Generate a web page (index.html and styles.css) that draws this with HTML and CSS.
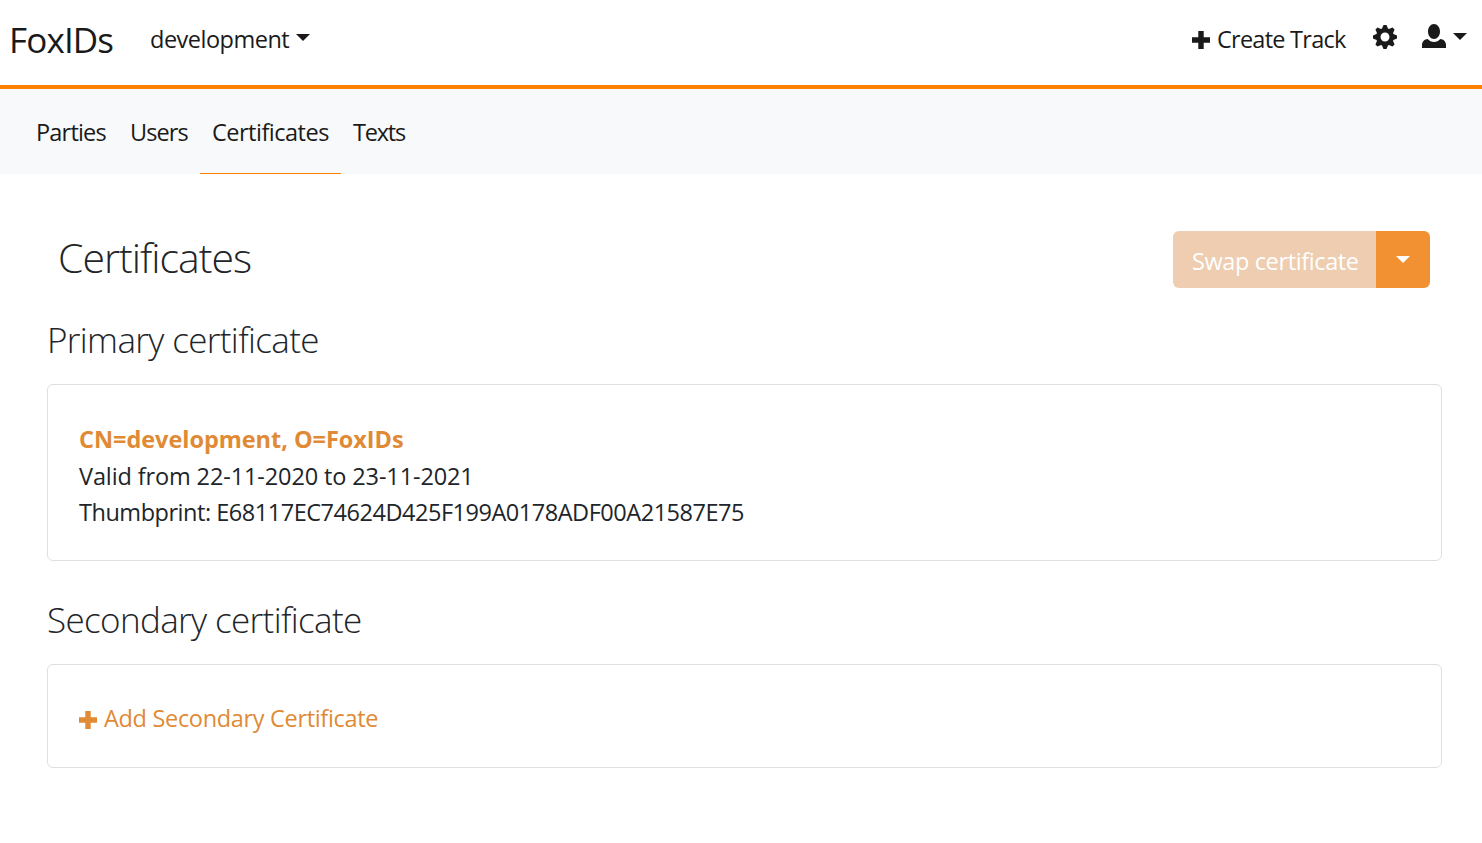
FILE: index.html
```html
<!DOCTYPE html>
<html lang="en">
<head>
<meta charset="utf-8">
<title>FoxIDs</title>
<link rel="stylesheet" href="styles.css">
</head>
<body>
<header class="topbar">
  <a class="brand">FoxIDs</a>
  <a class="track"><span class="track-name">development</span><i class="caret"></i></a>
  <nav class="actions">
    <a class="create"><svg class="plus" viewBox="0 0 18 18"><path d="M6.3 0h5.4v6.3H18v5.4h-6.3V18H6.3v-6.3H0V6.3h6.3z"/></svg><span class="create-text">Create Track</span></a>
    <svg class="gear" viewBox="0 0 8 8"><path d="M3.5 0l-.5 1.190-.31.13-1.190-.5-.69.69.5 1.190-.13.31-1.190.5v1l1.190.5.13.31-.5 1.190.69.69 1.190-.5.31.13.5 1.190h1l.5-1.190.31-.13 1.190.5.69-.69-.5-1.190.13-.31 1.190-.5v-1l-1.190-.5-.13-.31.5-1.190-.69-.69-1.190.5-.31-.13-.5-1.190h-1zm.5 2.500c.83 0 1.500.67 1.500 1.500s-.67 1.500-1.500 1.500-1.500-.67-1.500-1.500.67-1.500 1.500-1.500z"/></svg>
    <a class="user"><svg class="person" viewBox="0 0 8 8"><path d="M4 0c-1.100 0-2 1.120-2 2.500s.9 2.500 2 2.500 2-1.120 2-2.500-.9-2.500-2-2.500zm-2.090 5c-1.060.05-1.910.92-1.910 2v1h8v-1c0-1.080-.84-1.950-1.910-2-.54.61-1.280 1-2.090 1-.81 0-1.550-.39-2.090-1z"/></svg><i class="caret"></i></a>
  </nav>
</header>
<nav class="tabs">
  <a class="tab tab-parties">Parties</a>
  <a class="tab tab-users">Users</a>
  <a class="tab tab-certificates active">Certificates</a>
  <a class="tab tab-texts">Texts</a>
</nav>
<main class="content">
  <div class="heading">
    <h1 class="title">Certificates</h1>
    <div class="button-group">
      <button class="swap" disabled><span class="swap-text">Swap certificate</span></button>
      <button class="toggle" aria-label="More"><i class="caret"></i></button>
    </div>
  </div>
  <h2 class="subtitle primary">Primary certificate</h2>
  <section class="card">
    <div class="line subject"><span>CN=development, O=FoxIDs</span></div>
    <div class="line valid"><span>Valid from 22-11-2020 to 23-11-2021</span></div>
    <div class="line thumb"><span>Thumbprint: E68117EC74624D425F199A0178ADF00A21587E75</span></div>
  </section>
  <h2 class="subtitle secondary">Secondary certificate</h2>
  <section class="card card-add">
    <a class="line add"><svg class="plus" viewBox="0 0 18 18"><path d="M6.300 0h5.400v6.300H18v5.400h-6.300V18H6.300v-6.300H0V6.300h6.300z"/></svg><span>Add Secondary Certificate</span></a>
  </section>
</main>
</body>
</html>
```

FILE: styles.css
```css
* { box-sizing: border-box; }
body {
  margin: 0;
  background: #fff;
  color: #212529;
  font: 400 23.5px/36px "Open Sans", "Noto Sans", sans-serif;
  white-space: nowrap;
}
svg { display: block; fill: currentColor; flex: none; }
.caret {
  display: block;
  border: 7px solid transparent;
  border-top-color: currentColor;
  border-bottom: 0;
}
.topbar {
  height: 89px;
  border-bottom: 4px solid #fd8000;
  display: flex;
  align-items: flex-start;
  color: #1a1a1a;
  padding: 21px 15px 0 9px;
}
.brand { width: 141px; font-size: 35px; line-height: 37px; letter-spacing: -.85px; }
.track { display: flex; gap: 6px; }
.track .caret { margin-top: 13px; }
.track-name { width: 140px; letter-spacing: -.5px; }
.actions { margin-left: auto; display: flex; }
.create { display: flex; gap: 7px; }
.create .plus { margin-top: 10px; }
.plus { width: 18px; height: 18px; }
.create-text { width: 129px; letter-spacing: -.75px; }
.gear { width: 24px; height: 24px; margin: 4px 25px 0 27px; }
.user { display: flex; gap: 7px; }
.person { width: 24px; height: 24px; margin-top: 3px; }
.user .caret { margin-top: 12px; }
.tabs {
  height: 85px;
  background: #f8f9fb;
  color: #1a1a1a;
  display: flex;
  padding-left: 24px;
}
.tab { padding: 25px 0 0 12px; border-bottom: 1px solid transparent; }
.tab-parties { width: 94px; letter-spacing: -.8px; }
.tab-users { width: 82px; letter-spacing: -.9px; }
.tab-certificates { width: 141px; letter-spacing: -.5px; }
.tab-texts { letter-spacing: -1.2px; }
.tab.active { border-bottom-color: #fd8000; }
.content { padding: 57px 40px 0 47px; }
.heading {
  display: flex;
  justify-content: space-between;
  padding: 0 12px 0 11px;
  height: 57px;
}
.title { margin: 0; font-size: 41px; font-weight: 300; line-height: 52px; letter-spacing: -1px; }
.button-group { display: flex; width: 257px; height: 57px; border-radius: 6px; overflow: hidden; }
button { border: 0; padding: 0; margin: 0; font: inherit; color: #fff; }
.swap { width: 203px; background: #eecdb0; padding: 3px 0 0 19px; text-align: left; letter-spacing: -.38px; }
.toggle { width: 54px; background: #f29131; display: flex; justify-content: center; align-items: center; }
.subtitle { margin: 0; font-size: 35px; font-weight: 300; line-height: 48px; letter-spacing: -.63px; }
.primary { margin-top: 28px; }
.secondary { margin-top: 35px; }
.card {
  border: 1px solid #dfdfdf;
  border-radius: 6px;
  height: 177px;
  margin-top: 20px;
  padding: 36px 31px 0;
}
.line { display: block; }
.subject { color: #e08a35; font-weight: 700; letter-spacing: -.04px; margin-bottom: 1px; }
.valid { letter-spacing: -.12px; }
.thumb { letter-spacing: -.47px; }
.card-add { height: 104px; padding-top: 35px; }
.add { display: flex; gap: 7px; color: #e08a35; letter-spacing: -.32px; }
.add .plus { margin-top: 11px; }
```
